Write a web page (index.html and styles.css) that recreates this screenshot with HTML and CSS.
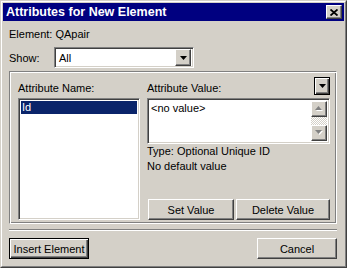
FILE: index.html
```html
<!DOCTYPE html>
<html lang="en">
<head>
    <meta name="viewport" content="width=device-width,initial-scale=1.0">
    <title>Attributes for New Element</title>
    <link rel="stylesheet" href="styles.css">
</head>
<body>

    <div class="window">
        <div class="frame">

            <div class="titlebar">
                <span class="title">Attributes for New Element</span>
                <button class="close-button raised">
                    <svg width="8" height="7" viewBox="0 0 8 7"><path d="M0.5 0.5L7.5 6.5M7.5 0.5L0.5 6.5" stroke="#000" stroke-width="1.8"/></svg>
                </button>
            </div>

            <div class="content">
                <div class="element-row">Element: QApair</div>

                <div class="show-row">
                    <span class="show-label">Show:</span>
                    <div class="combo sunken">
                        <span class="combo-text">All</span>
                        <span class="combo-button raised">
                            <svg width="7" height="4" viewBox="0 0 7 4"><polygon points="0,0 7,0 3.5,4" fill="#000"/></svg>
                        </span>
                    </div>
                </div>

                <div class="group">
                    <div class="name-column">
                        <div class="field-label">Attribute Name:</div>
                        <div class="listbox sunken">
                            <div class="list-item selected">Id</div>
                        </div>
                    </div>

                    <div class="value-column">
                        <div class="value-head">
                            <span class="field-label">Attribute Value:</span>
                            <button class="menu-button default-button">
                                <svg width="7" height="4" viewBox="0 0 7 4"><polygon points="0,0 7,0 3.5,4" fill="#000"/></svg>
                            </button>
                        </div>

                        <div class="value-box sunken">
                            <div class="value-text">&lt;no value&gt;</div>
                            <div class="vscroll">
                                <span class="scroll-button raised">
                                    <svg width="9" height="6" viewBox="0 0 9 6"><polygon points="4.5,1 8,5 1,5" fill="#fff"/><polygon points="3.5,0 7,4 0,4" fill="#808080"/></svg>
                                </span>
                                <span class="scroll-track"></span>
                                <span class="scroll-button raised">
                                    <svg width="9" height="6" viewBox="0 0 9 6"><polygon points="1,1 8,1 4.5,5" fill="#fff"/><polygon points="0,0 7,0 3.5,4" fill="#808080"/></svg>
                                </span>
                            </div>
                        </div>

                        <div class="info-line">Type: Optional Unique ID</div>
                        <div class="info-line">No default value</div>

                        <div class="value-actions">
                            <button class="push-button raised set-button">Set Value</button>
                            <button class="push-button raised delete-button">Delete Value</button>
                        </div>
                    </div>
                </div>

                <div class="separator"></div>

                <div class="footer">
                    <button class="push-button default-button">Insert Element</button>
                    <button class="push-button raised">Cancel</button>
                </div>
            </div>

        </div>
    </div>

</body>
</html>
```

FILE: styles.css
```css
* {
    box-sizing: border-box;
}

body {
    margin: 0;
    background: #d4d0c8;
    font-family: "Liberation Sans", Arial, sans-serif;
    font-size: 11px;
    color: #000;
}

button {
    font: inherit;
    color: inherit;
    margin: 0;
    padding: 0;
    background: #d4d0c8;
}

/* 3D helpers */
.raised {
    background: #d4d0c8;
    border: 1px solid;
    border-color: #fff #404040 #404040 #fff;
    box-shadow: inset -1px -1px #808080;
}

.sunken {
    background: #fff;
    border: 1px solid;
    border-color: #808080 #fff #fff #808080;
    box-shadow: inset 1px 1px #404040, inset -1px -1px #d4d0c8;
}

.default-button {
    background: #d4d0c8;
    border: 1px solid #000;
    box-shadow: inset 1px 1px #fff, inset -1px -1px #404040, inset -2px -2px #808080;
}

/* window frame */
.window {
    width: 347px;
    height: 268px;
    border: 1px solid;
    border-color: #d4d0c8 #404040 #404040 #d4d0c8;
}

.frame {
    height: 100%;
    border: 1px solid;
    border-color: #fff #808080 #808080 #fff;
    padding: 1px;
    display: flex;
    flex-direction: column;
}

.titlebar {
    height: 18px;
    flex: none;
    background: #000080;
    display: flex;
    align-items: center;
    justify-content: space-between;
    padding: 0 2px 0 3px;
}

.title {
    color: #fff;
    font-weight: bold;
    font-size: 12.5px;
}

.close-button {
    width: 16px;
    height: 14px;
    display: flex;
    align-items: center;
    justify-content: center;
}

.content {
    padding: 0 7px 0 6px;
}

.element-row {
    margin-top: 7px;
    height: 13px;
    line-height: 13px;
}

.show-row {
    margin-top: 6px;
    display: flex;
    align-items: center;
}

.show-label {
    width: 45px;
}

.combo {
    width: 140px;
    height: 21px;
    display: flex;
    align-items: center;
    justify-content: space-between;
    padding: 2px;
}

.combo-text {
    padding-left: 2px;
}

.combo-button {
    width: 16px;
    height: 17px;
    display: flex;
    align-items: center;
    justify-content: center;
}

/* group box */
.group {
    margin-top: 3px;
    height: 153px;
    border: 1px solid;
    border-color: #808080 #fff #fff #808080;
    box-shadow: inset 1px 1px #fff, inset -1px -1px #808080;
    padding: 5px 6px 3px 8px;
    display: flex;
    gap: 7px;
}

.field-label {
    line-height: 13px;
}

.name-column {
    width: 122px;
    display: flex;
    flex-direction: column;
}

.name-column .field-label {
    margin-top: 5px;
}

.listbox {
    margin-top: 3px;
    flex: 1;
    padding: 2px;
}

.list-item {
    height: 13px;
    line-height: 13px;
    padding-left: 1px;
}

.list-item.selected {
    background: #0a246a;
    color: #fff;
}

.value-column {
    flex: 1;
    display: flex;
    flex-direction: column;
}

.value-head {
    height: 18px;
    display: flex;
    align-items: flex-end;
    justify-content: space-between;
}

.menu-button {
    width: 16px;
    height: 18px;
    display: flex;
    align-items: center;
    justify-content: center;
}

.value-box {
    margin-top: 3px;
    height: 46px;
    padding: 2px;
    display: flex;
}

.value-text {
    flex: 1;
    padding: 1px 0 0 1px;
    line-height: 13px;
}

.vscroll {
    width: 16px;
    display: flex;
    flex-direction: column;
}

.scroll-button {
    height: 16px;
    display: flex;
    align-items: center;
    justify-content: center;
}

.scroll-track {
    flex: 1;
    background: repeating-conic-gradient(#d4d0c8 0 25%, #fff 0 50%) 0 0 / 2px 2px;
}

.info-line {
    line-height: 15px;
}

.value-actions {
    margin-top: auto;
    display: flex;
    gap: 2px;
    padding-left: 1px;
}

.push-button {
    height: 21px;
    text-align: center;
}

.set-button {
    width: 86px;
}

.delete-button {
    flex: 1;
}

.separator {
    margin-top: 5px;
    height: 2px;
    border-top: 1px solid #808080;
    border-bottom: 1px solid #fff;
}

.footer {
    margin-top: 7px;
    display: flex;
    justify-content: space-between;
}

.footer .push-button {
    width: 80px;
}
```
